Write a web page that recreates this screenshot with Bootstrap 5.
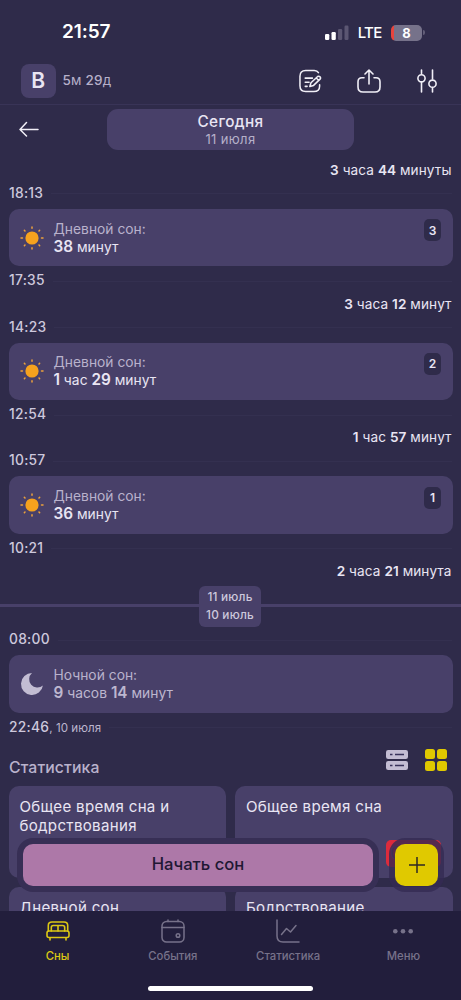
<!DOCTYPE html>
<html lang="ru">
<head>
<meta charset="utf-8">
<meta name="viewport" content="width=device-width, initial-scale=1">
<title>Сны</title>
<link href="https://cdn.jsdelivr.net/npm/bootstrap@5.3.0/dist/css/bootstrap.min.css" rel="stylesheet">
<style>
body{margin:0;background:#2f2b4a;color:#e9e5f3;font-family:Inter,"Liberation Sans",sans-serif;font-size:14px;line-height:1.3}
b{font-weight:600}
svg{display:block;flex:none}
.screen{height:1000px;overflow:hidden}
.status{height:58px;padding:7px 39px 0 62px}
.clock{font-size:19px;font-weight:600;letter-spacing:-.1px;color:#fff}
.lte{font-size:15px;font-weight:500;letter-spacing:-.7px;color:#fff}
.battery{width:31px;height:16px;border-radius:5px;background:linear-gradient(90deg,#e8443c 3px,#76728a 3px);font-size:13px;line-height:16px;font-weight:700;color:#fff}
.battery::after{content:"";position:absolute;left:32px;top:5.5px;width:1.5px;height:5px;border-radius:0 2px 2px 0;background:#625e78}
.profile{height:47px;padding:0 24px 0 21px;border-bottom:1px solid #393457}
.avatar{width:34.5px;height:34.5px;border-radius:8px;background:#484069;font-size:21px;font-weight:600}
.age{font-size:13.5px;color:#b6b0c9;margin-left:7px;letter-spacing:.15px}
.age b{font-weight:500}
.daybar{height:54.2px;padding:4px 0 0 19px}
.back{margin-right:-19px}
.daypill{width:247px;height:41px;margin-left:87px;border-radius:11px;background:#484069;letter-spacing:.35px;padding-top:3px}
.daypill .day{font-size:15.3px;line-height:19px;font-weight:500}
.daypill .date{font-size:13px;line-height:17px;color:#b6b0c9}
.gap-time{height:23.2px;padding-right:9.5px;font-size:13.6px;letter-spacing:.08px}
.stamp{height:23.2px;padding:0 9px;font-size:13.8px;font-weight:500;color:#cdc8dc;letter-spacing:.25px;gap:8px}
.stamp::after{content:"";flex:1;height:1px;background:#343050}
.stamp small{font-size:11.6px;font-weight:400;letter-spacing:.05px;color:#bbb5cd}
.sleep{height:57.4px;margin:3.4px 8.5px;padding:0 11.5px 0 11.5px;border-radius:10px;background:#484069}
.sleep .words{margin-left:9.5px;line-height:18px;letter-spacing:.02px;font-size:13.8px}
.sleep .kind{color:#b9b2cc}
.sleep .words b{font-size:15.3px;letter-spacing:0}
.sleep .kind{letter-spacing:.02px}
.sleep.night .words{color:#bdb7cf}
.num{width:17px;height:22px;margin-top:10.5px;border-radius:5px;background:#2f2b4a;font-size:12px;font-weight:600}
.daysplit{height:45px}
.daysplit::before{content:"";position:absolute;left:0;right:0;top:20.5px;height:3px;background:#484069}
.daysplit div{width:62px;height:41px;left:-.5px;border-radius:6px;background:#484069;font-size:11.8px;line-height:18px;font-weight:500;letter-spacing:.2px;color:#cdc8dc}
.stathead{height:46.5px;padding:0 14px 0 9px}
.stathead .title{font-size:15.8px;font-weight:500;color:#b9b2cc;letter-spacing:.1px;padding-top:11px}
.tiles{display:grid;grid-template-columns:1fr 1fr;gap:9px;padding:0 8.5px;height:125px;overflow:hidden;grid-auto-rows:92px}
.tile{border-radius:10px;background:#484069;padding:11px;font-size:15.1px;line-height:19px;letter-spacing:.3px}
.dock{left:23px;right:23px;top:844px;height:42px}
.start{width:350px;border-radius:10px;background:#ad78a8;color:#201733;font-size:16.6px;font-weight:500;letter-spacing:.02px;box-shadow:0 0 0 6px #372f55}
.plus{width:43px;border-radius:10px;background:#e0c900;box-shadow:0 0 0 6px rgba(53,42,82,.8)}
.flag{left:386px;top:840px;width:55px;height:27px;border-radius:5px;background:#dd2b3c;color:#695773;font-size:17px;line-height:27px;padding-left:4px;overflow:hidden}
.tabs{height:89px;background:#221e3c;color:#77728a;padding-top:7px}
.tabs .tab{width:115.25px;font-size:11.3px;font-weight:500;letter-spacing:0;line-height:16px}
.tabs .tab svg{margin-bottom:4px}
.tabs .on{color:#dcc814}
.homebar{left:148px;top:985.5px;width:165px;height:5.5px;border-radius:3px;background:#fff}
</style>
</head>
<body>
<svg width="0" height="0" class="position-absolute">
  <symbol id="sun" viewBox="0 0 24 24"><circle cx="12" cy="12" r="6.600" fill="#f6a21e"/><g stroke="#eda13c" stroke-width="1.500" stroke-linecap="round"><path d="M12 1v1.200M12 21.800v1.200M1 12h1.500M21.500 12H23M4.400 4.400l.6.6M19 19l.6.6M4.400 19.600l.6-.6M19 5l.6-.6"/></g></symbol>
</svg>
<main class="screen position-relative">
  <header>
    <div class="status d-flex align-items-center">
      <span class="clock me-auto">21:57</span>
      <svg width="24" height="16" viewBox="0 0 24 16" fill="#fff"><rect x="0" y="9" width="4.300" height="6" rx="1.200"/><rect x="6.500" y="7" width="4.300" height="8" rx="1.200"/><g fill="#5b5672"><rect x="13" y="4" width="4.200" height="11" rx="1.200"/><rect x="19.500" y="0.500" width="4" height="14.500" rx="1.200"/></g></svg>
      <span class="lte" style="margin:0 9.500px 0 9px">LTE</span>
      <span class="battery position-relative text-center">8</span>
    </div>
    <div class="profile d-flex align-items-center">
      <span class="avatar d-flex align-items-center justify-content-center">B</span>
      <span class="age me-auto"><b>5</b>м <b>29</b>д</span>
      <div class="d-flex" style="gap:35px">
        <svg width="23" height="24" viewBox="0 0 24 24" fill="none" stroke="#f1eff7" stroke-width="1.600" stroke-linecap="round" stroke-linejoin="round"><path d="M20.300 3.300Q19 1 16 1H7Q1 1 1 7v10q0 6 6 6h8.500q6 0 6-5.500V16M6.500 9H14M6.500 13.300h4M6.500 17.600h2"/><path d="M11.300 17.800l1.200-4 7-6.500q1.300-.8 2.500.4 1 1.200 0 2.400l-6.800 6.500zM18 8.800l2.700 2.700"/></svg>
        <svg width="24" height="24" viewBox="0 0 24 24" fill="none" stroke="#f1eff7" stroke-width="1.600" stroke-linecap="round" stroke-linejoin="round"><path d="M7 8.800H5q-4 0-4 4V18q0 5 5 5h12q5 0 5-5v-5.200q0-4-4-4h-2M12 15V1M8 5l4-4 4 4"/></svg>
        <svg width="20" height="24" viewBox="0 0 20 24" fill="none" stroke="#f1eff7" stroke-width="1.600" stroke-linecap="round" style="margin-left:1px"><path d="M4.500 1v3.500M4.500 13.500V23M15.500 1v9M15.500 19v4"/><circle cx="4.500" cy="9.300" r="3.600"/><circle cx="15.500" cy="14.700" r="3.600"/></svg>
      </div>
    </div>
  </header>
  <div class="daybar d-flex">
    <svg class="back mt-2" width="20" height="24" viewBox="0 0 20 24" fill="none" stroke="#f1eff7" stroke-width="1.500" stroke-linecap="round" stroke-linejoin="round"><path d="M19 12.500H1M7.500 5.500L1 12.500l6.500 6.500"/></svg>
    <div class="daypill text-center">
      <div class="day">Сегодня</div><div class="date">11 июля</div>
    </div>
  </div>

  <div class="gap-time d-flex align-items-center justify-content-end"><span><b>3</b> часа <b>44</b> минуты</span></div>
  <div class="stamp d-flex align-items-center">18:13</div>
  <section class="sleep d-flex align-items-center">
    <svg width="24" height="24"><use href="#sun"/></svg>
    <div class="words me-auto"><div class="kind">Дневной сон:</div><div><b>38</b> минут</div></div>
    <span class="num align-self-start d-flex align-items-center justify-content-center">3</span>
  </section>
  <div class="stamp d-flex align-items-center">17:35</div>

  <div class="gap-time d-flex align-items-center justify-content-end"><span><b>3</b> часа <b>12</b> минут</span></div>
  <div class="stamp d-flex align-items-center">14:23</div>
  <section class="sleep d-flex align-items-center">
    <svg width="24" height="24"><use href="#sun"/></svg>
    <div class="words me-auto"><div class="kind">Дневной сон:</div><div><b>1</b> час <b>29</b> минут</div></div>
    <span class="num align-self-start d-flex align-items-center justify-content-center">2</span>
  </section>
  <div class="stamp d-flex align-items-center">12:54</div>

  <div class="gap-time d-flex align-items-center justify-content-end"><span><b>1</b> час <b>57</b> минут</span></div>
  <div class="stamp d-flex align-items-center">10:57</div>
  <section class="sleep d-flex align-items-center">
    <svg width="24" height="24"><use href="#sun"/></svg>
    <div class="words me-auto"><div class="kind">Дневной сон:</div><div><b>36</b> минут</div></div>
    <span class="num align-self-start d-flex align-items-center justify-content-center">1</span>
  </section>
  <div class="stamp d-flex align-items-center">10:21</div>

  <div class="gap-time d-flex align-items-center justify-content-end"><span><b>2</b> часа <b>21</b> минута</span></div>
  <div class="daysplit position-relative d-flex align-items-center justify-content-center"><div class="position-relative text-center d-flex flex-column justify-content-center"><span>11 июль</span><span>10 июль</span></div></div>
  <div class="stamp d-flex align-items-center">08:00</div>
  <section class="sleep night d-flex align-items-center">
    <svg width="24" height="24" viewBox="0 0 24 24"><path d="M12 1A11 11 0 1 0 22.900 13.500 7.800 7.800 0 0 1 12 1Z" fill="#c3bdd3"/></svg>
    <div class="words me-auto"><div class="kind">Ночной сон:</div><div><b>9</b> часов <b>14</b> минут</div></div>
  </section>
  <div class="stamp d-flex align-items-center"><span>22:46<small>, 10 июля</small></span></div>

  <div class="stathead d-flex align-items-center">
    <span class="title me-auto">Статистика</span>
    <svg width="22" height="20" viewBox="0 0 22 20" style="margin-top:-4px"><g fill="#c3bdd3"><rect width="22" height="9" rx="2.200"/><rect y="11" width="22" height="9" rx="2.200"/></g><path d="M4 4.500h2.500M9 4.500h9M4 15.500h2.500M9 15.500h9" stroke="#37325a" stroke-width="1.600"/></svg>
    <svg width="22" height="22" viewBox="0 0 22 22" fill="#e0c900" style="margin:-4px 0 0 17px"><rect width="10" height="10" rx="2.500"/><rect x="12" width="10" height="10" rx="2.500"/><rect y="12" width="10" height="10" rx="2.500"/><rect x="12" y="12" width="10" height="10" rx="2.500"/></svg>
  </div>
  <div class="tiles">
    <div class="tile">Общее время сна и бодрствования</div>
    <div class="tile">Общее время сна</div>
    <div class="tile">Дневной сон</div>
    <div class="tile">Бодрствование</div>
  </div>
  <nav class="tabs d-flex">
    <div class="tab d-flex flex-column align-items-center on">
      <svg width="24" height="26" viewBox="0 0 24 26" fill="none" stroke="currentColor" stroke-width="1.600" stroke-linejoin="round" stroke-linecap="round"><path d="M2.300 13V7.500Q2.300 4 6 4h12q3.700 0 3.700 3.500V13M5.300 13V9.500q0-2 2-2h9.400q2 0 2 2V13M12 7.500V13"/><rect x="1" y="13" width="22" height="6.500" rx="2"/><path d="M4 20v2M20 20v2"/></svg>
      Сны</div>
    <div class="tab d-flex flex-column align-items-center">
      <svg width="24" height="26" viewBox="0 0 24 26" fill="none" stroke="currentColor" stroke-width="1.500" stroke-linecap="round"><rect x="1" y="3.500" width="22" height="20.500" rx="4.500"/><path d="M1 9.500h22M7 3.500V2M17 3.500V2"/><circle cx="17" cy="17.500" r="1.800"/></svg>
      События</div>
    <div class="tab d-flex flex-column align-items-center">
      <svg width="24" height="26" viewBox="0 0 24 26" fill="none" stroke="currentColor" stroke-width="1.500" stroke-linecap="round" stroke-linejoin="round"><path d="M1 2v16q0 6 6 6h16M5.500 16.500l5-6 4 3.500 5.500-6.500"/></svg>
      Статистика</div>
    <div class="tab d-flex flex-column align-items-center">
      <svg width="24" height="26" viewBox="0 0 24 26" fill="currentColor"><circle cx="4.300" cy="13.200" r="2.300"/><circle cx="12" cy="13.200" r="2.300"/><circle cx="19.700" cy="13.200" r="2.300"/></svg>
      Меню</div>
  </nav>
  <div class="flag position-absolute">0</div>
  <div class="dock position-absolute d-flex justify-content-between">
    <div class="start d-flex align-items-center justify-content-center">Начать сон</div>
    <div class="plus d-flex align-items-center justify-content-center"><svg width="18" height="18" viewBox="0 0 18 18" stroke="#2d2825" stroke-width="1.500"><path d="M9 1v16M1 9h16"/></svg></div>
  </div>
  <div class="homebar position-absolute"></div>
</main>
<script src="https://cdn.jsdelivr.net/npm/bootstrap@5.3.0/dist/js/bootstrap.bundle.min.js"></script>
</body>
</html>
